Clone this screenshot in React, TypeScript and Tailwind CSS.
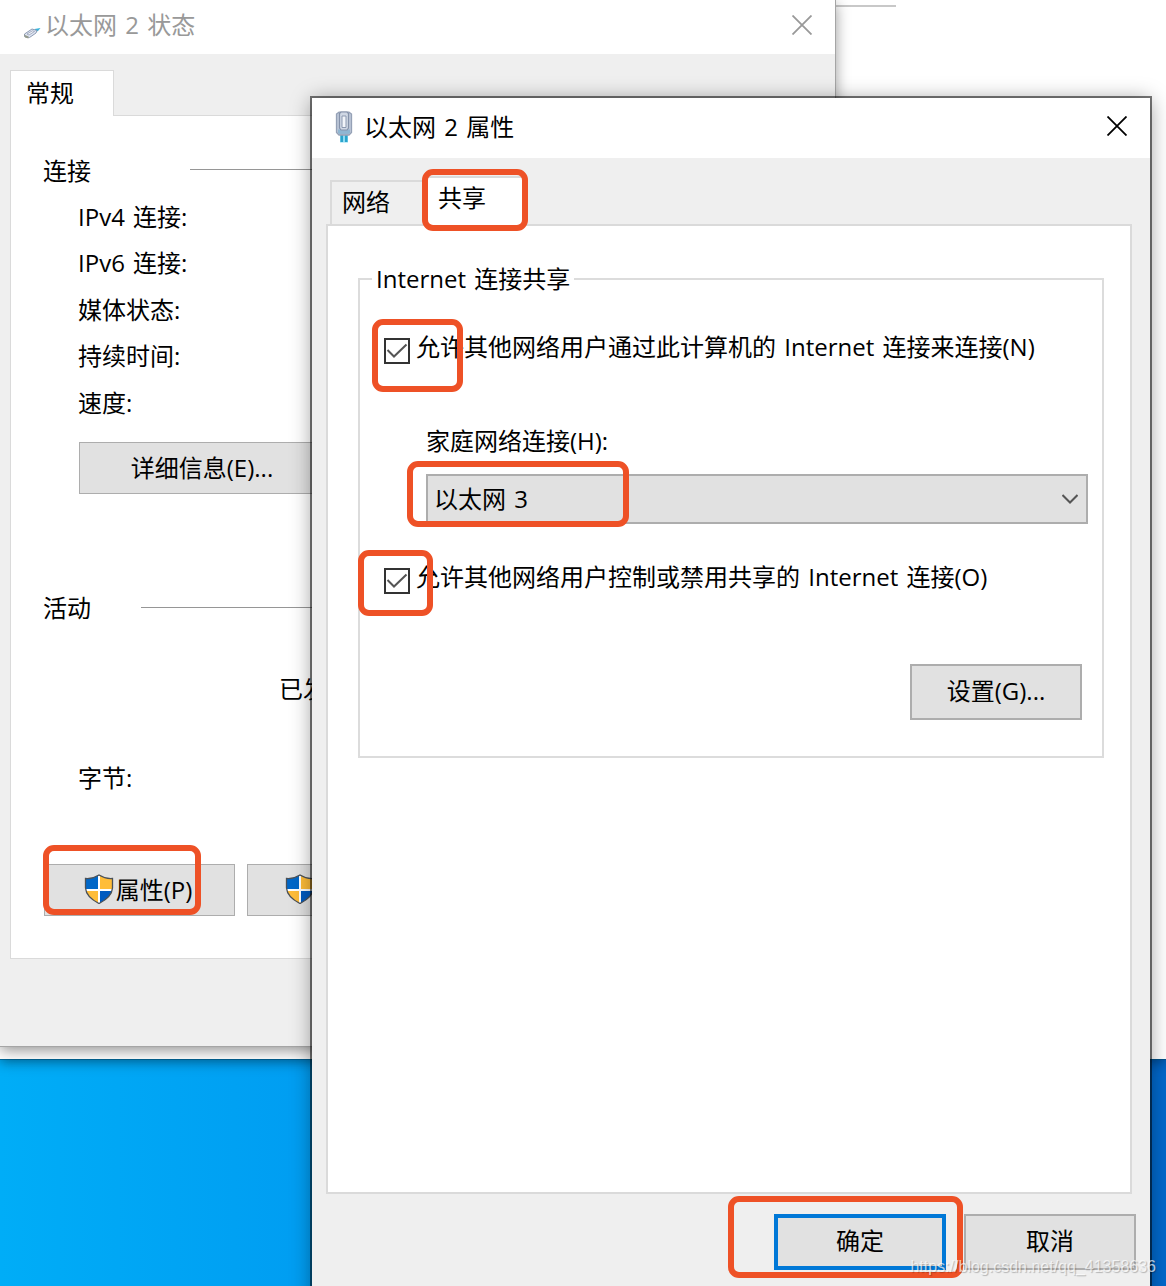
import React from 'react';
import clsx from 'clsx';

interface WindowButtonProps {
  children: React.ReactNode;
  className?: string;
}

const WindowButton: React.FC<WindowButtonProps> = ({ children, className }) => (
  <button className={clsx('flex shrink-0 items-center justify-center bg-[#e1e1e1] whitespace-nowrap', className)}>
    {children}
  </button>
);

const CloseIcon: React.FC = () => (
  <svg className="h-5 w-5" viewBox="0 0 20 20" fill="none" stroke="currentColor" strokeWidth={1.8}>
    <path d="M0.5 0.5L19.5 19.5M19.5 0.5L0.5 19.5" />
  </svg>
);

const ShieldIcon: React.FC = () => (
  <svg className="-mt-[2px] -ml-[3px] h-[30px] w-[30px] shrink-0" viewBox="0 0 30 30">
    <clipPath id="shield">
      <path d="M1.500 4.500C7 5 11 3.500 15 1C19 3.500 23 5 28.500 4.500V14C28 21 22 26 15 29.500C8 26 2 21 1.500 14Z" />
    </clipPath>
    <g clipPath="url(#shield)">
      <path fill="#0067c8" d="M0 0H15V15H0Z" />
      <path fill="#ffbd38" d="M15 0H30V15H15Z" />
      <path fill="#ffbd38" d="M0 15H15V30H0Z" />
      <path fill="#005bc0" d="M15 15H30V30H15Z" />
      <path stroke="#fff" strokeWidth={2} d="M15 0V30M0 16H30" />
    </g>
    <path
      d="M1.500 4.500C7 5 11 3.500 15 1C19 3.500 23 5 28.500 4.500V14C28 21 22 26 15 29.500C8 26 2 21 1.500 14Z"
      fill="none"
      stroke="#4b5157"
      strokeWidth={1.300}
    />
  </svg>
);

const CableIcon: React.FC = () => (
  <svg className="h-[13px] w-[18px]" viewBox="0 0 18 13">
    <path d="M11.500 2L17.500 1L15 4L12.500 5Z" fill="#35b3dc" />
    <path d="M1.500 7L9 2L14 3.500L13 6L6.500 10.500L1.500 9.500Z" fill="#dfe5f2" stroke="#8d9ab2" strokeWidth={1} />
    <path d="M4 7L9.500 3.800L11.500 4.500L6 8Z" fill="#f4f6fb" stroke="#8a94ad" strokeWidth={0.700} />
    <path d="M1 7.500L5.500 9.500L5.500 11.500L2 10.500Z" fill="#949a8c" />
  </svg>
);

const PlugIcon: React.FC = () => (
  <svg className="-mt-[2px] h-8 w-[18px]" viewBox="0 0 18 32">
    <path d="M5 23H13V31.500H5Z" fill="#8fdcf2" />
    <path d="M5.500 23H8V31H5.500ZM10 23H12.500V31H10Z" fill="#2aa3cc" />
    <path d="M1.500 3L4 1.200H14L16.500 3V21.500L14 24H4L1.500 21.500Z" fill="#bdc7d8" stroke="#95a1b6" strokeWidth={1.300} />
    <path d="M3 18.500H15V22L13.500 23H4.500L3 22Z" fill="#8fb6d2" />
    <path d="M4.500 2.500L6 1H12L13.500 2.500V17L12 19H6L4.500 17Z" fill="#cfd7e4" stroke="#8592aa" strokeWidth={1.200} />
    <path d="M7 5H11V16.500H7Z" fill="#f2f5fa" stroke="#8c99b0" strokeWidth={1} />
  </svg>
);

const Checkbox: React.FC<{ label: string }> = ({ label }) => (
  <label className="flex h-8 items-start">
    <span className="mt-1 flex h-[26px] w-[26px] shrink-0 items-center justify-center border-2 border-[#333] bg-white">
      <svg className="h-[22px] w-[22px]" viewBox="0 0 22 22" fill="none" stroke="#555" strokeWidth={2}>
        <path d="M1.500 10L8 16.500L20.500 4.500" />
      </svg>
    </span>
    <span className="-mt-px ml-[6px] h-[27px] leading-[27px] whitespace-nowrap">{label}</span>
  </label>
);

const Highlight: React.FC<{ className: string }> = ({ className }) => (
  <div className={clsx('pointer-events-none absolute z-20 rounded-[11px] border-[6px] border-[#ee5126]', className)} />
);

const SectionTitle: React.FC<{ title: string; className: string }> = ({ title, className }) => (
  <div className={clsx('flex h-6 items-center leading-6', className)}>
    <span className="-mt-px shrink-0">{title}</span>
    <span className="-mt-[3px] h-px flex-1 bg-[#969696]" />
  </div>
);

const connectionRows = ['IPv4 连接:', 'IPv6 连接:', '媒体状态:', '持续时间:', '速度:'];

const StatusWindow: React.FC = () => (
  <div className="absolute top-0 left-0 flex h-[1046px] w-[835px] flex-col bg-[#efefef] shadow-[0_0_0_1px_#a5a5a5,0_4px_14px_rgba(0,0,0,0.45)]">
    <div className="flex h-[54px] shrink-0 items-center bg-white pr-[23px] pl-[23px] text-[#999]">
      <span className="mt-3">
        <CableIcon />
      </span>
      <span className="-mt-[5px] ml-1 flex-1 leading-8">以太网 2 状态</span>
      <span className="-mt-1">
        <CloseIcon />
      </span>
    </div>

    <div className="mx-[10px] mt-4 flex flex-col">
      <div className="z-10 -mb-px flex h-[46px] w-[104px] items-center border border-b-0 border-[#dadada] bg-white pb-[2px] pl-[15px]">
        常规
      </div>
      <div className="flex h-[844px] flex-col border border-[#dadada] bg-white pl-8">
        <SectionTitle title="连接" className="mt-[43px] gap-[99px]" />
        <div className="mt-[10.5px] mb-[0.5px] pl-[35px]">
          {connectionRows.map((row) => (
            <div key={row} className="flex h-[46.5px] items-center">
              {row}
            </div>
          ))}
        </div>
        <WindowButton className="mt-[15px] ml-9 h-[52px] w-[246px] border border-[#adadad]">详细信息(E)...</WindowButton>
        <SectionTitle title="活动" className="mt-[103px] gap-[50px]" />
        <div className="mt-[56px] mb-px pl-[236px] leading-6">已发送</div>
        <div className="mt-[64px] mb-px pl-[35px] leading-6">字节:</div>
        <div className="mt-[73px] flex gap-3 pl-px">
          <WindowButton className="h-[52px] w-[191px] gap-[2px] border border-[#adadad]">
            <ShieldIcon />
            属性(P)
          </WindowButton>
          <WindowButton className="h-[52px] w-[191px] gap-[2px] border border-[#adadad]">
            <ShieldIcon />
            禁用(D)
          </WindowButton>
        </div>
      </div>
    </div>
  </div>
);

const PropertiesWindow: React.FC = () => (
  <div className="absolute top-[98px] left-[312px] flex h-[1210px] w-[838px] flex-col bg-[#efefef] shadow-[0_0_0_2px_rgba(0,0,0,0.52),0_2px_20px_rgba(0,0,0,0.4)]">
    <div className="flex h-[60px] shrink-0 items-center bg-white pr-[23px] pl-[23px]">
      <PlugIcon />
      <span className="-mt-[2px] ml-[11px] flex-1">以太网 2 属性</span>
      <span className="-mt-1">
        <CloseIcon />
      </span>
    </div>

    <div className="mt-[18px] flex h-12 items-end pl-[18px]">
      <div className="flex h-[44px] w-[94px] items-center border-2 border-r-0 border-b-0 border-[#dadada] pb-[2px] pl-[10px]">
        网络
      </div>
      <div className="z-10 -mb-[2px] h-[50px] w-[102px] border-2 border-b-0 border-[#dadada] bg-white pt-1 pl-3">共享</div>
    </div>

    <div className="mx-[14px] h-[970px] w-[806px] shrink-0 border-2 border-[#dadada] bg-white px-[30px] pt-[52px]">
      <div className="h-[480px] w-[746px] border-2 border-[#dcdcdc]">
        <div className="-mt-[15px] ml-3 h-[27px] w-[202px] bg-white pl-1 leading-[27px] whitespace-nowrap">
          Internet 连接共享
        </div>
        <div className="mt-[42px] pl-6">
          <Checkbox label="允许其他网络用户通过此计算机的 Internet 连接来连接(N)" />
        </div>
        <div className="mt-[63px] pl-[66px] leading-6">家庭网络连接(H):</div>
        <div className="mt-[21px] ml-[66px] flex h-[50px] w-[662px] items-center justify-between border-2 border-[#adadad] bg-[#e1e1e1] pr-2 pl-[6px]">
          以太网 3
          <svg className="h-[10px] w-4" viewBox="0 0 16 10" fill="none" stroke="#555" strokeWidth={2}>
            <path d="M0.500 1L8 8.500L15.500 1" />
          </svg>
        </div>
        <div className="mt-10 pl-6">
          <Checkbox label="允许其他网络用户控制或禁用共享的 Internet 连接(O)" />
        </div>
        <WindowButton className="mt-[68px] ml-[550px] h-14 w-[172px] border-2 border-[#adadad] pb-[2px]">
          设置(G)...
        </WindowButton>
      </div>
    </div>

    <div className="mt-5 flex shrink-0 justify-end gap-[18px] pr-[14px]">
      <WindowButton className="h-14 w-[172px] border-4 border-[#0078d7] pb-[2px]">确定</WindowButton>
      <WindowButton className="h-14 w-[172px] border-2 border-[#adadad] pb-[2px]">取消</WindowButton>
    </div>
  </div>
);

const App: React.FC = () => {
  return (
    <div className="relative h-[1286px] w-[1166px] overflow-hidden bg-white font-['Open_Sans','Noto_Sans_CJK_SC',sans-serif] text-2xl text-black [word-spacing:2px]">
      {/* desktop and the window that lies furthest back */}
      <div className="flex h-full flex-col bg-linear-to-r from-[#00adf7] via-[#0098f0] via-35% to-[#0068cc] to-95%">
        <div className="z-0 h-[1059px] shrink-0 bg-white pt-[5px] pl-[836px] shadow-[0_0_0_1px_rgba(0,80,120,0.6),0_3px_12px_rgba(0,0,0,0.4)]">
          <div className="h-[2px] w-[60px] bg-[#c8c8c8]" />
        </div>
      </div>

      <StatusWindow />
      <Highlight className="top-[845px] left-[43px] h-[70px] w-[158px]" />

      <PropertiesWindow />
      <Highlight className="top-[169px] left-[422px] h-[62px] w-[106px]" />
      <Highlight className="top-[319px] left-[372px] h-[73px] w-[91px]" />
      <Highlight className="top-[461px] left-[407px] h-[66px] w-[222px]" />
      <Highlight className="top-[550px] left-[358px] h-[66px] w-[75px]" />
      <Highlight className="top-[1196px] left-[728px] h-[82px] w-[235px]" />

      <div className="absolute right-[10px] bottom-[7px] z-30 font-['Liberation_Sans',sans-serif] text-base leading-6 text-white/70 [text-shadow:1px_1px_1px_rgba(0,0,0,0.25)]">
        https://blog.csdn.net/qq_41358636
      </div>
    </div>
  );
};

export default App;
